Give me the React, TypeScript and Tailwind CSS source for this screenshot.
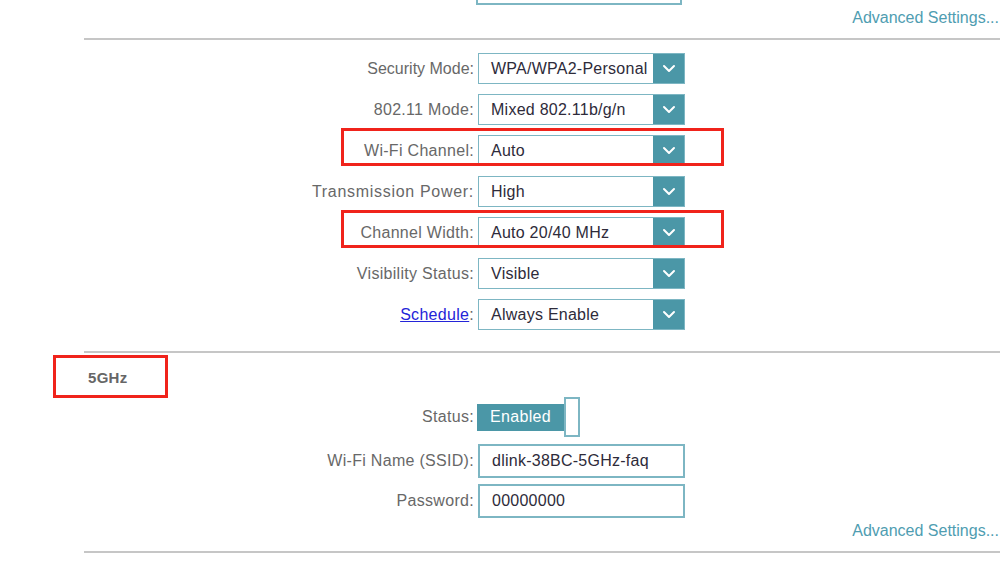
import React from "react";

const Chevron = () => (
  <svg width="14" height="9" viewBox="0 0 14 9" fill="none">
    <polyline points="2,2 7,7 12,2" stroke="white" strokeWidth="2" strokeLinecap="round" strokeLinejoin="round" />
  </svg>
);

const Select = ({ value }: { value: string }) => (
  <div className="flex w-[207px] h-[31px] border border-[#7db6c3]">
    <div className="flex-1 flex items-center pl-[12px] text-[16px] tracking-[0.25px] text-[#2e2b3a] whitespace-nowrap overflow-hidden">{value}</div>
    <div className="w-[31px] bg-[#4b97a7] flex items-center justify-center">
      <Chevron />
    </div>
  </div>
);

const RedBox = ({ className }: { className: string }) => (
  <div className={"absolute border-[3px] border-[#f0231b] pointer-events-none " + className} />
);

const Row = ({
  label,
  children,
  red,
  tall,
  wide,
  narrow,
}: {
  label: React.ReactNode;
  children: React.ReactNode;
  red?: boolean;
  tall?: boolean;
  wide?: boolean;
  narrow?: boolean;
}) => (
  <div className={"relative flex items-center " + (tall ? "h-[34px]" : "h-[31px]")}>
    {red && <RedBox className="left-[341px] top-[-7px] w-[383px] h-[38px]" />}
    <div
      className={
        "w-[474px] text-right text-[16px] text-[#686868] whitespace-nowrap " +
        (wide ? "tracking-[0.7px]" : narrow ? "tracking-[0px]" : "tracking-[0.3px]")
      }
    >
      {label}
    </div>
    <div className="ml-[4px]">{children}</div>
  </div>
);

const Input = ({ value }: { value: string }) => (
  <div className="w-[207px] h-[34px] border-2 border-[#7db6c3] flex items-center pl-[12px] text-[16px] tracking-[0.25px] text-[#2e2b3a]">{value}</div>
);

const Hr = () => <div className="ml-[84px] h-[2px] bg-[#c6c6c6]" />;

const Advanced = () => (
  <div className="h-[33px] flex justify-end pt-[4px]">
    <span className="text-[16px] leading-[18px] text-[#4f9db1] whitespace-nowrap mr-[1px]">
      Advanced Settings...
    </span>
  </div>
);

export default function App() {
  return (
    <div
      className="relative w-[1000px] h-[563px] overflow-hidden bg-white"
      style={{ fontFamily: '"Liberation Sans", Arial, sans-serif' }}
    >
      <div className="ml-[476px] w-[206px] h-[5px] border-2 border-t-0 border-[#7db6c3]" />
      <Advanced />
      <Hr />

      <div className="pt-[13px] pb-[21px] flex flex-col gap-[10px]">
        <Row label="Security Mode:" narrow><Select value="WPA/WPA2-Personal" /></Row>
        <Row label="802.11 Mode:"><Select value="Mixed 802.11b/g/n" /></Row>
        <Row label="Wi-Fi Channel:" red><Select value="Auto" /></Row>
        <Row label="Transmission Power:" wide><Select value="High" /></Row>
        <Row label="Channel Width:" red><Select value="Auto 20/40 MHz" /></Row>
        <Row label="Visibility Status:"><Select value="Visible" /></Row>
        <Row
          label={
            <>
              <span className="text-[#2424d8] underline">Schedule</span>:
            </>
          }
        >
          <Select value="Always Enable" />
        </Row>
      </div>
      <Hr />

      <div className="relative h-[44px] pt-[13px] pl-[88px]">
        <RedBox className="left-[53px] top-[2px] w-[115px] h-[43px]" />
        <span className="text-[15px] leading-[18px] font-bold tracking-[0.3px] text-[#666]">5GHz</span>
      </div>

      <div className="flex items-center h-[40px]">
        <div className="w-[474px] text-right text-[16px] text-[#686868] tracking-[0.3px]">Status:</div>
        <div className="ml-[3px] flex items-center">
          <div className="w-[87px] h-[27px] bg-[#4b97a7] flex items-center justify-center text-white text-[16px] font-medium tracking-[0.3px]">
            Enabled
          </div>
          <div className="w-[16px] h-[40px] border-2 border-[#7db6c3] bg-white" />
        </div>
      </div>

      <div className="pt-[7px] flex flex-col gap-[6px]">
        <Row label="Wi-Fi Name (SSID):" tall><Input value="dlink-38BC-5GHz-faq" /></Row>
        <Row label="Password:" tall><Input value="00000000" /></Row>
      </div>
      <Advanced />
      <Hr />
    </div>
  );
}
